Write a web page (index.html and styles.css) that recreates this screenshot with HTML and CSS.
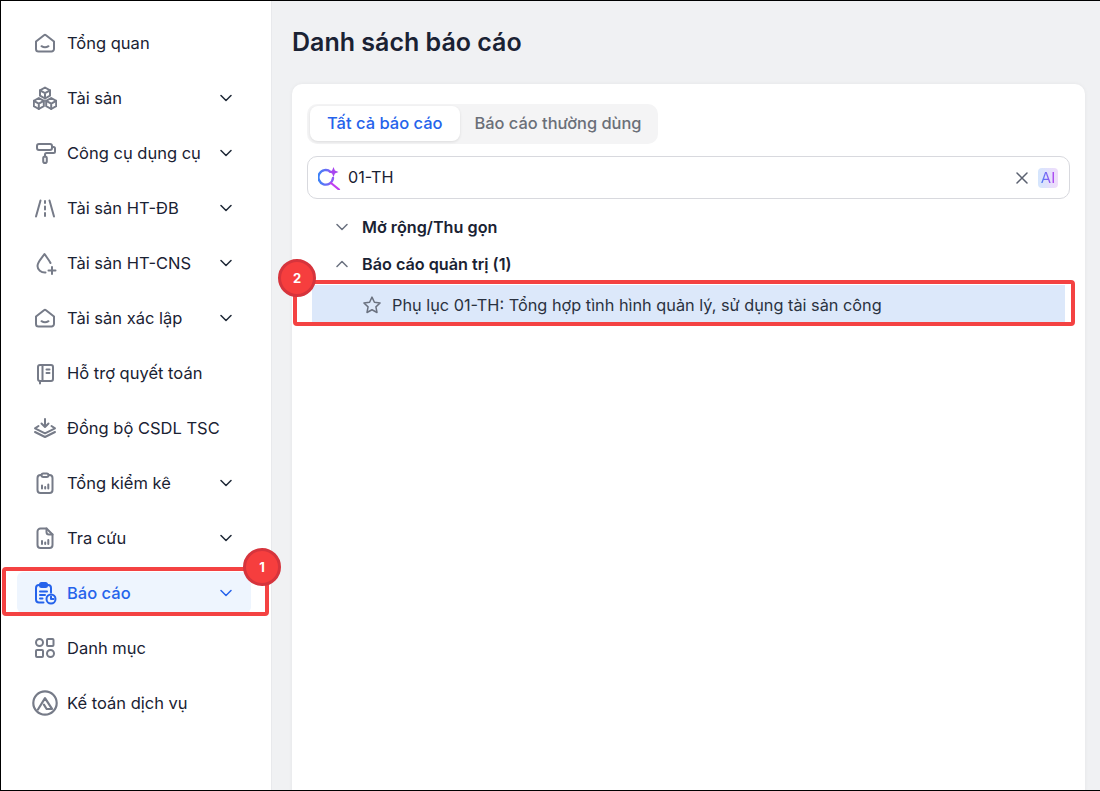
FILE: index.html
```html
<!DOCTYPE html>
<html lang="en">
<head>
  <meta charset="UTF-8" />
  <title>Danh sách báo cáo</title>
  <link rel="stylesheet" href="styles.css">
</head>
<body>
  <div id="app">
    <!-- Sidebar -->
    <nav class="sidebar">
      <div class="nav-item">
        <svg class="nav-icon" viewBox="0 0 24 24"><path d="M3 10.5 11 4.2a1.6 1.6 0 0 1 2 0l8 6.3v7.5a2.5 2.5 0 0 1-2.5 2.5h-13A2.5 2.5 0 0 1 3 18z"/><path d="M8.5 15.2c2 1.2 5 1.2 7 0"/></svg>
        <span class="nav-label">Tổng quan</span>
      </div>
      <div class="nav-item">
        <svg class="nav-icon" viewBox="0 0 24 24"><path d="M12 1.5 17 4.3v5.4L12 12.5 7 9.7V4.3z"/><path d="M7 4.3l5 2.8 5-2.8M12 7.1v5.4"/><path d="M5.8 12 10.8 14.8v5.4l-5 2.8-5-2.8v-5.4z"/><path d="M.8 14.8l5 2.8 5-2.8M5.8 17.6V23"/><path d="M18.2 12l5 2.8v5.4l-5 2.8-5-2.8v-5.4z"/><path d="M13.2 14.8l5 2.8 5-2.8M18.2 17.6V23"/></svg>
        <span class="nav-label">Tài sản</span>
        <svg class="chevron" viewBox="0 0 12 12"><path d="M1 3.5 6 8.5l5-5"/></svg>
      </div>
      <div class="nav-item">
        <svg class="nav-icon" viewBox="0 0 24 24"><rect x="4" y="3" width="15" height="6" rx="2"/><path d="M19 6h1.5A1.5 1.5 0 0 1 22 7.5v3a1.5 1.5 0 0 1-1.5 1.5h-7a1.5 1.5 0 0 0-1.5 1.5v2"/><rect x="10.2" y="15.5" width="3.6" height="6.5" rx="1.8"/></svg>
        <span class="nav-label">Công cụ dụng cụ</span>
        <svg class="chevron" viewBox="0 0 12 12"><path d="M1 3.5 6 8.5l5-5"/></svg>
      </div>
      <div class="nav-item">
        <svg class="nav-icon" viewBox="0 0 24 24"><path d="M7.5 4.5 3 20.5M16.5 4.5 21 20.5"/><path d="M12 5v2M12 10.5v3M12 17v3"/></svg>
        <span class="nav-label">Tài sản HT-ĐB</span>
        <svg class="chevron" viewBox="0 0 12 12"><path d="M1 3.5 6 8.5l5-5"/></svg>
      </div>
      <div class="nav-item">
        <svg class="nav-icon" viewBox="0 0 24 24"><path d="M12.5 21.5C8 21.8 4.5 18.5 4.5 15 4.5 11 9 7 11.5 3c2 3 4.5 6 6 9"/><path d="M19 16v7M15.5 19.5h7"/></svg>
        <span class="nav-label">Tài sản HT-CNS</span>
        <svg class="chevron" viewBox="0 0 12 12"><path d="M1 3.5 6 8.5l5-5"/></svg>
      </div>
      <div class="nav-item">
        <svg class="nav-icon" viewBox="0 0 24 24"><path d="M3 10.5 11 4.2a1.6 1.6 0 0 1 2 0l8 6.3v7.5a2.5 2.5 0 0 1-2.5 2.5h-13A2.5 2.5 0 0 1 3 18z"/><path d="M8.5 15.2c2 1.2 5 1.2 7 0"/></svg>
        <span class="nav-label">Tài sản xác lập</span>
        <svg class="chevron" viewBox="0 0 12 12"><path d="M1 3.5 6 8.5l5-5"/></svg>
      </div>
      <div class="nav-item">
        <svg class="nav-icon" viewBox="0 0 24 24"><rect x="5" y="4" width="15" height="16" rx="2"/><path d="M9.5 4v16M7 20v2.5M13.5 8.5h3M13.5 12h3"/></svg>
        <span class="nav-label">Hỗ trợ quyết toán</span>
      </div>
      <div class="nav-item">
        <svg class="nav-icon" viewBox="0 0 24 24"><path d="M12 3v7.5M8.5 7.5 12 11l3.5-3.5"/><path d="M5.5 10 2 12.3l10 5 10-5L18.5 10"/><path d="M2 16l10 5 10-5"/></svg>
        <span class="nav-label">Đồng bộ CSDL TSC</span>
      </div>
      <div class="nav-item">
        <svg class="nav-icon" viewBox="0 0 24 24"><rect x="4.5" y="4" width="15" height="18" rx="3"/><rect class="icon-tab" x="8.5" y="2.5" width="7" height="3.5" rx="1.7"/><path d="M9 17.5v-3M12.2 17.5V16M15.3 17.5v-4"/></svg>
        <span class="nav-label">Tổng kiểm kê</span>
        <svg class="chevron" viewBox="0 0 12 12"><path d="M1 3.5 6 8.5l5-5"/></svg>
      </div>
      <div class="nav-item">
        <svg class="nav-icon" viewBox="0 0 24 24"><path d="M13.5 2.5H7.5a3 3 0 0 0-3 3V19a3 3 0 0 0 3 3h9a3 3 0 0 0 3-3V8.5z"/><path d="M13.5 2.5V6A2.5 2.5 0 0 0 16 8.5h3.5"/><path d="M9 18v-3M12.2 18v-1.5M15.3 18v-4"/></svg>
        <span class="nav-label">Tra cứu</span>
        <svg class="chevron" viewBox="0 0 12 12"><path d="M1 3.5 6 8.5l5-5"/></svg>
      </div>
      <div class="nav-item active">
        <svg class="nav-icon" viewBox="0 0 24 24"><path d="M10.5 21.5H6a3 3 0 0 1-3-3V7a3 3 0 0 1 3-3h9a3 3 0 0 1 3 3v4.5"/><rect x="7" y="2" width="7" height="4" rx="1.5"/><path d="M7 10.5h7M7 14h5M7 17.5h2.5"/><circle cx="18" cy="18" r="4.5"/><path d="M18 15.5V18h2.5"/></svg>
        <span class="nav-label">Báo cáo</span>
        <svg class="chevron" viewBox="0 0 12 12"><path d="M1 3.5 6 8.5l5-5"/></svg>
      </div>
      <div class="nav-item">
        <svg class="nav-icon" viewBox="0 0 24 24"><circle cx="6.5" cy="6.5" r="3.5"/><rect x="14" y="3" width="6.5" height="7" rx="1"/><rect x="3" y="14" width="7" height="7" rx="1"/><circle cx="17.5" cy="17.5" r="3.5"/></svg>
        <span class="nav-label">Danh mục</span>
      </div>
      <div class="nav-item">
        <svg class="nav-icon nav-icon-big" viewBox="0 0 24 24"><circle cx="12" cy="12" r="10.8"/><path d="M5.5 18 12 7.5l6.5 10h-5l-2.5-4"/></svg>
        <span class="nav-label">Kế toán dịch vụ</span>
      </div>
    </nav>

    <!-- Main -->
    <main class="main">
      <h1 class="page-title">Danh sách báo cáo</h1>
      <section class="card">
        <div class="tabs">
          <div class="tab tab-active">Tất cả báo cáo</div>
          <div class="tab">Báo cáo thường dùng</div>
        </div>

        <div class="search-box">
          <svg class="search-icon" viewBox="0 0 24 24">
            <defs>
              <linearGradient id="ai-grad" x1="0" y1="0" x2="1" y2="0">
                <stop offset="0" stop-color="#3b82f6"/>
                <stop offset="1" stop-color="#8f5cf6"/>
              </linearGradient>
            </defs>
            <path class="search-ring" d="M12.5 5.8A7.3 7.3 0 1 0 15 12"/>
            <path class="search-handle" d="M13 17l8 6.5"/>
            <path class="search-star" d="M15.5 1l1.4 3.6 3.6 1.4-3.6 1.4-1.4 3.6-1.4-3.6L10.5 6l3.6-1.4z"/>
          </svg>
          <span class="search-text">01-TH</span>
          <svg class="clear-icon" viewBox="0 0 12 12"><path d="M1 1l10 10M11 1 1 11"/></svg>
          <span class="ai-badge"><span class="ai-text">AI</span></span>
        </div>

        <div class="tree-row">
          <svg class="tree-chevron" viewBox="0 0 12 12"><path d="M1 3.5 6 8.5l5-5"/></svg>
          <span class="tree-label">Mở rộng/Thu gọn</span>
        </div>
        <div class="tree-row tree-row-group">
          <svg class="tree-chevron" viewBox="0 0 12 12"><path d="M1 8.5 6 3.5l5 5"/></svg>
          <span class="tree-label">Báo cáo quản trị (1)</span>
        </div>
        <div class="report-row">
          <svg class="star-icon" viewBox="0 0 24 24"><path d="M12 2.5l2.9 6.2 6.8.9-5 4.7 1.3 6.7-6-3.3-6 3.3 1.3-6.7-5-4.7 6.8-.9z"/></svg>
          <span class="report-label">Phụ lục 01-TH: Tổng hợp tình hình quản lý, sử dụng tài sản công</span>
        </div>
      </section>
    </main>

    <!-- Callouts -->
    <div class="mark mark-nav"></div>
    <div class="mark mark-row"></div>
    <div class="badge badge-nav">1</div>
    <div class="badge badge-row">2</div>
  </div>
</body>
</html>
```

FILE: styles.css
```css
html, body {
  margin: 0;
  padding: 0;
  height: 100%;
  font-family: Inter, "Noto Sans", sans-serif;
  color: #1a2233;
  overflow: hidden;
}

#app {
  position: relative;
  display: flex;
  box-sizing: border-box;
  height: 791px;
  border: 1px solid #000;
  border-right: none;
  background-color: #f0f1f3;
  overflow: hidden;
}

/* sidebar */
.sidebar {
  box-sizing: border-box;
  width: 271px;
  flex-shrink: 0;
  padding: 21px 20px 0 16px;
  background-color: #fff;
  border-right: 1px solid #e8e9ec;
}

.nav-item {
  display: flex;
  align-items: center;
  height: 41px;
  margin-bottom: 14px;
  padding: 0 16px;
  border-radius: 6px;
  font-size: 16.5px;
  line-height: 24px;
}

.nav-icon {
  width: 24px;
  height: 24px;
  margin-right: 10px;
  flex-shrink: 0;
  fill: none;
  stroke: #767b88;
  stroke-width: 2;
  stroke-linecap: round;
  stroke-linejoin: round;
}

.icon-tab {
  fill: #fff;
}

.nav-icon-big {
  width: 26px;
  height: 26px;
  margin-left: -1px;
  margin-right: 9px;
}

.nav-label {
  flex: 1;
}

.chevron {
  width: 12px;
  height: 12px;
  margin-right: 3px;
  fill: none;
  stroke: #1f2937;
  stroke-width: 1.5;
  stroke-linecap: round;
  stroke-linejoin: round;
}

.nav-item.active {
  background-color: #eef5fe;
  color: #2563eb;
  font-weight: 500;
}

.nav-item.active .nav-icon,
.nav-item.active .chevron {
  stroke: #2563eb;
}

/* main */
.main {
  flex: 1;
  padding: 0 15px 0 20px;
}

.page-title {
  margin: 24px 0 25px;
  font-size: 25px;
  line-height: 34px;
  font-weight: 600;
}

.card {
  box-sizing: border-box;
  height: 720px;
  padding: 20px 15px;
  background-color: #fff;
  border-radius: 10px;
  box-shadow: 0 0 4px rgba(0, 0, 0, 0.05);
}

.tabs {
  display: inline-flex;
  box-sizing: border-box;
  height: 40px;
  padding: 2px 3px;
  background-color: #f4f4f5;
  border-radius: 10px;
}

.tab {
  padding: 0 14px 0 15px;
  font-size: 16.4px;
  line-height: 35px;
  font-weight: 500;
  color: #6b6f78;
}

.tab-active {
  padding: 0 17px;
  height: 35px;
  font-size: 16.5px;
  background-color: #fff;
  color: #2563eb;
  border-radius: 8px;
  box-shadow: 0 1px 3px rgba(0, 0, 0, 0.1);
}

.search-box {
  display: flex;
  align-items: center;
  box-sizing: border-box;
  height: 43px;
  margin-top: 12px;
  padding: 0 11px 0 10px;
  border: 1px solid #d8d9de;
  border-radius: 10px;
}

.search-icon {
  width: 24px;
  height: 24px;
  margin-right: 6px;
  fill: none;
}

.search-ring {
  fill: none;
  stroke: url(#ai-grad);
  stroke-width: 2.4;
  stroke-linecap: round;
}

.search-handle {
  stroke: #c13ef0;
  stroke-width: 2.2;
  stroke-linecap: round;
}

.search-star {
  fill: #a845f0;
}

.search-text {
  flex: 1;
  font-size: 16.2px;
  line-height: 22px;
  margin-bottom: 2px;
}

.clear-icon {
  width: 12px;
  height: 12px;
  margin-right: 10px;
  fill: none;
  stroke: #5b6170;
  stroke-width: 1.5;
  stroke-linecap: round;
}

.ai-badge {
  width: 20px;
  height: 20px;
  text-align: center;
  border-radius: 4px;
  background: linear-gradient(90deg, #d5e6fd, #f0dcfb);
  font-size: 15px;
  line-height: 20px;
}

.ai-text {
  background: linear-gradient(90deg, #4f7ff5, #b63cf0);
  -webkit-background-clip: text;
  background-clip: text;
  color: transparent;
}

.tree-row {
  display: flex;
  align-items: center;
  height: 24px;
  margin-top: 16px;
  padding-left: 29px;
}

.tree-row-group {
  margin-top: 13px;
}

.tree-chevron {
  width: 12px;
  height: 12px;
  margin-right: 14px;
  fill: none;
  stroke: #6b7280;
  stroke-width: 1.5;
  stroke-linecap: round;
  stroke-linejoin: round;
}

.tree-label {
  font-size: 16.2px;
  font-weight: 600;
}

.report-row {
  display: flex;
  align-items: center;
  box-sizing: border-box;
  height: 37px;
  margin: 9px 5px 0;
  padding: 2px 0 0 50px;
  background-color: #dce8fa;
}

.star-icon {
  width: 20px;
  height: 20px;
  margin-right: 10px;
  fill: none;
  stroke: #6b7280;
  stroke-width: 1.8;
  stroke-linejoin: round;
}

.report-label {
  font-size: 16.3px;
  color: #2a3240;
}

/* red callouts over the screen */
.mark {
  position: absolute;
  box-sizing: border-box;
  border: 4px solid #f44242;
  border-radius: 4px;
}

.mark-nav {
  left: 1px;
  top: 566px;
  width: 267px;
  height: 49px;
}

.mark-row {
  left: 292px;
  top: 279px;
  width: 782px;
  height: 46px;
}

.badge {
  position: absolute;
  box-sizing: border-box;
  width: 38px;
  height: 38px;
  text-align: center;
  background-color: #f63e3e;
  border: 3px solid #d6343c;
  border-radius: 50%;
  color: #fff;
  font-size: 13px;
  line-height: 32px;
  font-weight: 700;
}

.badge-nav {
  left: 242px;
  top: 547px;
}

.badge-row {
  left: 277px;
  top: 258px;
}
```
